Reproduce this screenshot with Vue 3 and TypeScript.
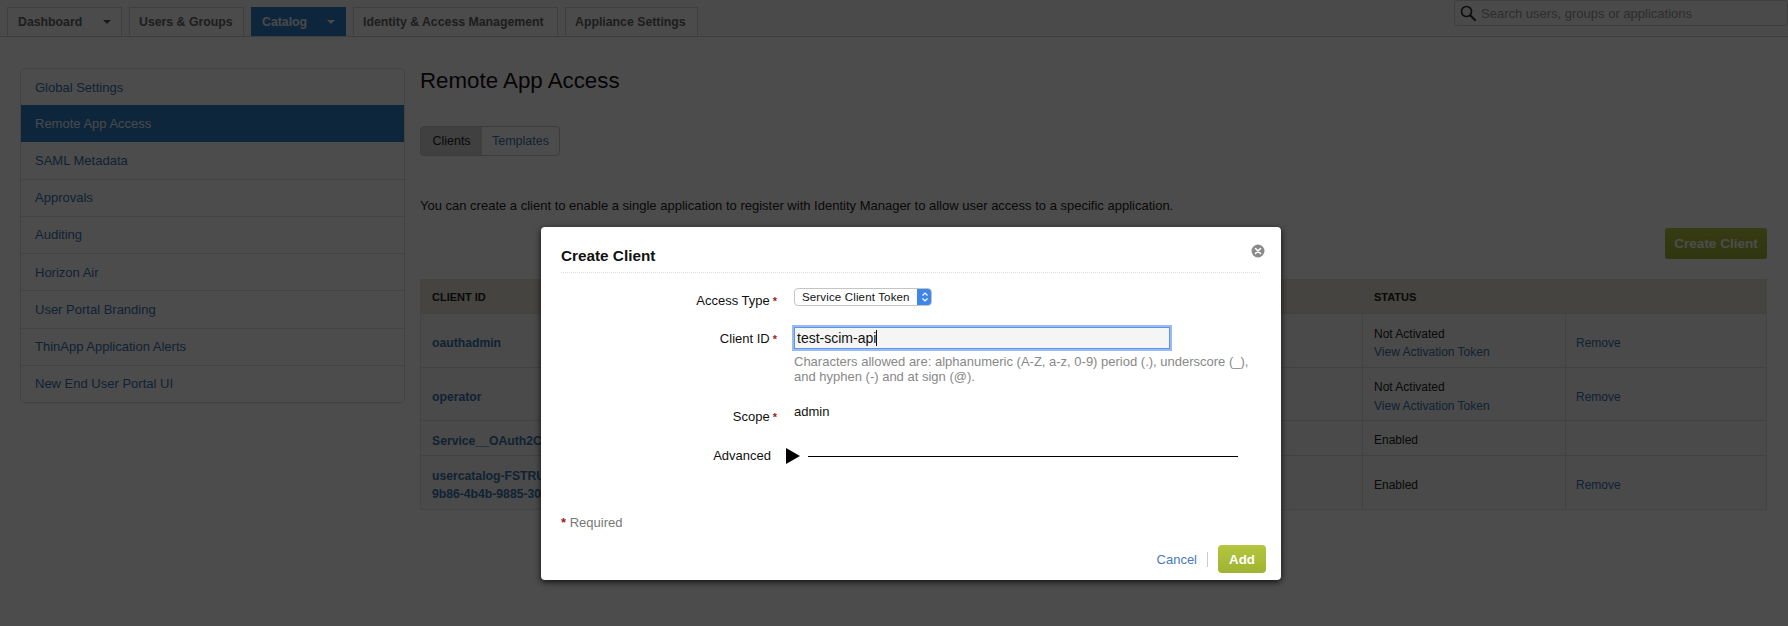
<script setup lang="ts">
interface Tab { label: string; caret?: boolean; active?: boolean }
interface Row { id: string[]; status: string; token?: boolean; remove: boolean; cls: string }

const tabs: Tab[] = [
  { label: 'Dashboard', caret: true },
  { label: 'Users & Groups' },
  { label: 'Catalog', caret: true, active: true },
  { label: 'Identity & Access Management' },
  { label: 'Appliance Settings' },
]
const sideItems = ['Global Settings', 'Remote App Access', 'SAML Metadata', 'Approvals', 'Auditing', 'Horizon Air', 'User Portal Branding', 'ThinApp Application Alerts', 'New End User Portal UI']
const rows: Row[] = [
  { id: ['oauthadmin'], status: 'Not Activated', token: true, remove: true, cls: 'r54' },
  { id: ['operator'], status: 'Not Activated', token: true, remove: true, cls: 'r53' },
  { id: ['Service__OAuth2C'], status: 'Enabled', remove: false, cls: 'r35' },
  { id: ['usercatalog-FSTRU', '9b86-4b4b-9885-302'], status: 'Enabled', remove: true, cls: 'r54' },
]
</script>

<template>
  <div class="page">
    <header class="topbar">
      <nav class="tabs">
        <a v-for="t in tabs" :key="t.label" class="tab" :class="{ active: t.active, 'has-caret': t.caret }">
          <span>{{ t.label }}</span>
          <i v-if="t.caret" class="caret-down"></i>
        </a>
      </nav>
      <div class="search">
        <svg class="search-icon" viewBox="0 0 16 16" width="16" height="16">
          <circle cx="6.5" cy="6.5" r="5" fill="none" stroke="currentColor" stroke-width="1.7" />
          <path d="M10.2 10.2 15 15" stroke="currentColor" stroke-width="2.2" stroke-linecap="round" />
        </svg>
        <span>Search users, groups or applications</span>
      </div>
    </header>

    <div class="content">
      <aside class="side">
        <a v-for="(s, i) in sideItems" :key="s" class="side-item" :class="{ current: i === 1 }">{{ s }}</a>
      </aside>

      <main class="main">
        <h1>Remote App Access</h1>
        <div class="segment">
          <span class="seg on">Clients</span>
          <span class="seg">Templates</span>
        </div>
        <p class="intro">You can create a client to enable a single application to register with Identity Manager to allow user access to a specific application.</p>
        <div class="actions"><button class="create">Create Client</button></div>
        <div class="table">
          <div class="thead">
            <div class="c1">CLIENT ID</div>
            <div class="c2">STATUS</div>
            <div class="c3"></div>
          </div>
          <div v-for="r in rows" :key="r.id[0]" class="trow" :class="r.cls">
            <div class="c1 cid"><div v-for="l in r.id" :key="l">{{ l }}</div></div>
            <div class="c2">
              <div>{{ r.status }}</div>
              <a v-if="r.token" class="lnk">View Activation Token</a>
            </div>
            <div class="c3"><a v-if="r.remove" class="lnk">Remove</a></div>
          </div>
        </div>
      </main>
    </div>

    <div class="overlay"></div>

    <section class="modal">
      <div class="m-head">
        <h2>Create Client</h2>
        <svg class="close" viewBox="0 0 14 14" width="14" height="14">
          <circle cx="7" cy="7" r="6.5" fill="#8a8a8a" />
          <path d="M4.5 4.5l5 5M9.5 4.5l-5 5" stroke="#fff" stroke-width="1.6" stroke-linecap="round" />
        </svg>
      </div>

      <div class="form">
        <div class="f-row f-access">
          <label>Access Type<b>*</b></label>
          <div class="select">
            <span class="sel-text">Service Client Token</span>
            <span class="sel-arrow">
              <svg viewBox="0 0 10 14" width="10" height="14">
                <path d="M2.5 5.5 5 3l2.5 2.5M2.5 8.5 5 11l2.5-2.5" fill="none" stroke="#fff" stroke-width="1.2" />
              </svg>
            </span>
          </div>
        </div>
        <div class="f-row f-client">
          <label>Client ID<b>*</b></label>
          <div>
            <div class="input">test-scim-api<span class="text-caret"></span></div>
            <p class="help">Characters allowed are: alphanumeric (A-Z, a-z, 0-9) period (.), underscore (_), and hyphen (-) and at sign (@).</p>
          </div>
        </div>
        <div class="f-row f-scope">
          <label>Scope<b>*</b></label>
          <div class="scope-val">admin</div>
        </div>
        <div class="f-row f-adv">
          <label>Advanced</label>
          <div class="adv">
            <i class="tri"></i>
            <span class="rule"></span>
          </div>
        </div>
      </div>

      <div class="required"><b>*</b> Required</div>

      <div class="m-foot">
        <a class="cancel">Cancel</a>
        <span class="sep"></span>
        <button class="add">Add</button>
      </div>
    </section>
  </div>
</template>

<style>
html, body { margin: 0; background: #fff; }
</style>

<style scoped>
.page {
  position: relative;
  width: 1788px;
  height: 626px;
  overflow: hidden;
  background: #fff;
  font-family: "Liberation Sans", Arial, sans-serif;
  font-size: 13px;
  color: #222;
}
.topbar {
  height: 36px;
  border-bottom: 1px solid #c9c9c9;
  background: #f8f8f8;
  display: flex;
  justify-content: space-between;
}
.tabs { display: flex; gap: 7px; padding: 7px 0 0 7px; }
.tab {
  height: 29px;
  box-sizing: border-box;
  border: 1px solid #d4d4d4;
  border-bottom: 0;
  background: #fbfbfb;
  padding: 0 9px;
  display: flex;
  align-items: center;
  justify-content: space-between;
  font-weight: bold;
  font-size: 12.3px;
  color: #666;
  white-space: nowrap;
}
.tab.has-caret { padding-left: 10px; }
.tab:nth-child(1) { width: 115px; }
.tab:nth-child(2) { width: 115px; }
.tab:nth-child(3) { width: 95px; }
.tab:nth-child(4) { width: 205px; }
.tab:nth-child(5) { width: 133px; }
.tab.active { background: #2f7fc8; border-color: #2f7fc8; color: #eef4fa; }
.caret-down { width: 0; height: 0; margin-right: 1px; border: 4px solid transparent; border-top: 4px solid #555; border-bottom: 0; }
.active .caret-down { border-top-color: #eef4fa; }
.search {
  width: 334px;
  height: 26px;
  box-sizing: border-box;
  border: 1px solid #d4d4d4;
  border-radius: 3px;
  display: flex;
  align-items: center;
  gap: 5px;
  padding-left: 5px;
  color: #999;
  font-size: 13px;
}
.search-icon { color: #333; flex: none; }
.content { display: flex; padding: 31px 21px 0 20px; gap: 15px; }
.side {
  width: 385px;
  flex: none;
  height: 335px;
  box-sizing: border-box;
  border: 1px solid #dcdcdc;
  border-radius: 5px;
  display: flex;
  flex-direction: column;
  overflow: hidden;
  box-shadow: 0 1px 1px rgba(0, 0, 0, .06);
}
.side-item {
  flex: 1;
  display: flex;
  align-items: center;
  padding-left: 14px;
  color: #3b73af;
  border-bottom: 1px solid #e2e2e2;
  font-size: 13px;
}
.side-item:last-child { border-bottom: 0; }
.side-item.current { background: #2f7fc8; color: #eef4fa; border-color: #2f7fc8; margin: -1px -1px 0; padding-left: 15px; }
.main { flex: 1; min-width: 0; }
h1 { margin: 0; font-size: 22.3px; font-weight: normal; line-height: 26px; color: #111; }
.segment {
  display: inline-flex;
  margin-top: 32px;
  height: 30px;
  width: 140px;
  box-sizing: border-box;
  border: 1px solid #c8c8c8;
  border-radius: 4px;
  overflow: hidden;
}
.seg { display: flex; align-items: center; justify-content: center; color: #3b73af; flex: 1; font-size: 12.5px; }
.seg.on { background: #d5d5d5; color: #222; flex: none; width: 61px; }
.intro { margin: 42px 0 0; line-height: 16px; font-size: 13px; color: #222; }
.actions { display: flex; justify-content: flex-end; margin-top: 14px; }
.create {
  width: 102px;
  height: 31px;
  border: 0;
  border-radius: 3px;
  background: linear-gradient(#b4c63f, #a0b333);
  color: #fff;
  font: bold 13.5px "Liberation Sans", Arial, sans-serif;
}
.table { margin-top: 20px; border: 1px solid #e4e4e4; border-top: 0; font-size: 12px; }
.thead, .trow { display: grid; grid-template-columns: 941px 203px 1fr; }
.thead { height: 34px; background: #e7e3da; font-weight: bold; font-size: 11px; color: #222; }
.thead > div { display: flex; align-items: center; padding: 1px 0 0 11px; }
.trow { background: #f6f9f6; border-top: 1px solid #dcdcdc; box-sizing: border-box; }
.trow > div { padding: 5px 0 0 11px; display: flex; flex-direction: column; justify-content: center; line-height: 18px; }
.trow > .c2 { line-height: 18.5px; }
.trow > .c3 { padding-left: 10px; }
.c2, .c3 { border-left: 1px solid #dcdcdc; }
.r54 { height: 54px; }
.r53 { height: 53px; }
.r35 { height: 35px; }
.cid { color: #3b73af; font-weight: bold; font-size: 12.2px; }
.lnk { color: #3b73af; }

.overlay { position: absolute; inset: 0; background: rgba(0, 0, 0, .7); }

.modal {
  position: absolute;
  left: 541px;
  top: 227px;
  width: 740px;
  height: 353px;
  background: #fff;
  border-radius: 4px;
  box-shadow: 0 2px 6px rgba(0, 0, 0, .8);
  box-sizing: border-box;
  padding: 0 21px 0 20px;
  display: flex;
  flex-direction: column;
}
.m-head {
  height: 45px;
  flex: none;
  border-bottom: 1px dotted #ddd;
  display: flex;
  justify-content: space-between;
  align-items: flex-start;
}
h2 { margin: 20px 0 0; font-size: 15.3px; line-height: 18px; font-weight: bold; color: #111; }
.close { margin-top: 17px; margin-right: -5px; }
.form { flex: none; }
.f-row { display: grid; grid-template-columns: 216px 1fr; column-gap: 17px; color: #111; }
.f-row label { text-align: right; line-height: 16px; font-size: 13px; }
.f-row b { color: #a01c1c; font-weight: bold; margin-left: 3px; font-size: 11px; }
.f-access { padding-top: 15px; height: 39px; }
.f-access label { padding-top: 5px; }
.select {
  width: 138px;
  height: 18px;
  box-sizing: border-box;
  border: 1px solid #c4c4c4;
  border-radius: 4px;
  display: flex;
  justify-content: space-between;
  overflow: hidden;
  font-size: 11.5px;
  line-height: 16px;
}
.sel-text { padding-left: 7px; letter-spacing: .15px; }
.sel-arrow { width: 15px; background: #3f86ea; display: flex; align-items: center; justify-content: center; margin: -1px -1px -1px 0; }
.f-client label { padding-top: 4px; }
.input {
  height: 22px;
  width: 376px;
  box-sizing: border-box;
  background: #f5f5f5;
  border: 1px solid #5f95e6;
  box-shadow: 0 0 0 2px rgba(95, 150, 235, .65);
  padding-left: 2px;
  font-size: 14px;
  line-height: 20px;
  color: #111;
  display: flex;
  align-items: center;
}
.text-caret { width: 1px; height: 16px; background: #111; }
.help { margin: 5px 0 0; width: 460px; font-size: 13px; line-height: 15px; color: #888; }
.f-scope { margin-top: 20px; height: 30px; }
.f-scope label { padding-top: 5px; }
.scope-val { line-height: 16px; }
.f-adv { margin-top: 14px; }
.f-adv label { padding-right: 6px; box-sizing: border-box; }
.adv { display: flex; align-items: center; gap: 8px; margin-left: -8px; }
.tri { width: 0; height: 0; border-style: solid; border-width: 8px 0 8px 14px; border-color: transparent transparent transparent #000; flex: none; }
.rule { display: block; width: 430px; height: 1px; background: #000; }
.required { margin-top: 51px; color: #777; font-size: 13px; line-height: 16px; }
.required b { color: #a01c1c; }
.m-foot { position: absolute; right: 15px; bottom: 7px; display: flex; align-items: center; }
.cancel { color: #4a7ab8; font-size: 13px; margin-right: 10px; }
.sep { width: 1px; height: 15px; background: #ccc; margin-right: 10px; }
.add {
  width: 48px;
  height: 28px;
  border: 0;
  border-radius: 4px;
  background: linear-gradient(#b4c63f, #a0b333);
  color: #fff;
  font: bold 13.3px "Liberation Sans", Arial, sans-serif;
}
</style>
